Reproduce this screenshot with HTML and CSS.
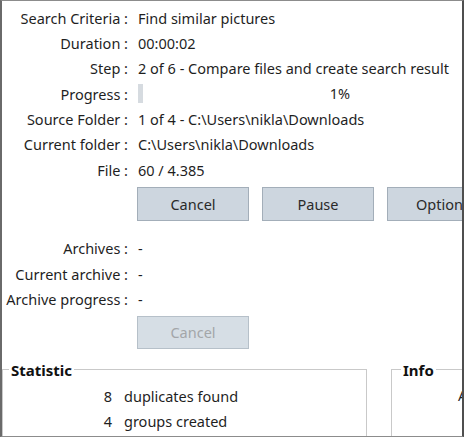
FILE: index.html
```html
<!DOCTYPE html>
<html>
<head>
<meta charset="utf-8">
<link rel="stylesheet" href="styles.css">
</head>
<body>
<div class="window">
  <div class="details">
    <span class="label">Search Criteria :</span><span class="value">Find similar pictures</span>
    <span class="label">Duration :</span><span class="value">00:00:02</span>
    <span class="label">Step :</span><span class="value">2 of 6 - Compare files and create search result</span>
    <span class="label">Progress :</span>
    <span class="value progress"><span class="progress-fill"></span><span class="progress-text">1%</span></span>
    <span class="label">Source Folder :</span><span class="value">1 of 4 - C:\Users\nikla\Downloads</span>
    <span class="label">Current folder :</span><span class="value">C:\Users\nikla\Downloads</span>
    <span class="label">File :</span><span class="value">60 / 4.385</span>
  </div>
  <div class="buttons main-buttons">
    <button class="btn">Cancel</button>
    <button class="btn">Pause</button>
    <button class="btn">Options</button>
  </div>
  <div class="details archive">
    <span class="label">Archives :</span><span class="value">-</span>
    <span class="label">Current archive :</span><span class="value">-</span>
    <span class="label">Archive progress :</span><span class="value">-</span>
  </div>
  <div class="buttons archive-buttons">
    <button class="btn" disabled>Cancel</button>
  </div>
  <div class="groups">
    <fieldset class="group statistic">
      <legend>Statistic</legend>
      <div class="stats">
        <span class="num">8</span><span>duplicates found</span>
        <span class="num">4</span><span>groups created</span>
      </div>
    </fieldset>
    <fieldset class="group info">
      <legend>Info</legend>
      <div class="info-text">Analyzing</div>
    </fieldset>
  </div>
</div>
</body>
</html>
```

FILE: styles.css
```css
html, body {
  margin: 0;
  padding: 0;
  background: #ffffff;
}

.window {
  width: 464px;
  height: 437px;
  box-sizing: border-box;
  border-top: 1px solid #8c8c8c;
  border-left: 2px solid #6a6a6a;
  border-right: 2px solid #4f4f4f;
  border-bottom: 1px solid #8c8c8c;
  background: #fff;
  overflow: hidden;
  font-family: "Noto Sans", "Open Sans", sans-serif;
  font-size: 14.5px;
  color: #1f1f1f;
}

.details {
  display: grid;
  grid-template-columns: 126px 1fr;
  column-gap: 10px;
  grid-auto-rows: 25.33px;
  align-items: center;
  padding-top: 4px;
}

.label {
  text-align: right;
  white-space: nowrap;
}

.value {
  white-space: nowrap;
}

.progress {
  position: relative;
  height: 19px;
  width: 404px;
}

.progress-fill {
  display: block;
  width: 5px;
  height: 19px;
  background: #d6dbe0;
}

.progress-text {
  position: absolute;
  left: 0;
  right: 0;
  top: 0;
  line-height: 19px;
  text-align: center;
}

.buttons {
  display: flex;
  gap: 13px;
  padding-left: 135px;
  white-space: nowrap;
}

.main-buttons {
  margin-top: 5px;
}

.btn {
  flex: none;
  width: 112px;
  height: 34px;
  box-sizing: border-box;
  background: #cdd6df;
  border: 1px solid #a3aeb9;
  border-radius: 0;
  font: inherit;
  color: #2a2a2a;
  padding: 0;
  white-space: nowrap;
  overflow: hidden;
}

.btn:disabled {
  background: #d6dee5;
  border-color: #b6c0c9;
  color: #a3a6a9;
  height: 33px;
}

.archive {
  margin-top: 14px;
  padding-top: 0;
  grid-auto-rows: 25.5px;
}

.archive-buttons {
  margin-top: 4px;
}

.groups {
  display: flex;
  gap: 24px;
  margin-top: 12px;
}

.group {
  margin: 0;
  border: 1px solid #c9c9c9;
  padding: 0 0 10px 0;
  min-width: 0;
  height: 100px;
  box-sizing: border-box;
}

.group legend {
  font-weight: bold;
  padding: 0 2px;
  margin-left: 6px;
  font-size: 15px;
  color: #111;
  line-height: 18px;
}

.info legend {
  margin-left: 9px;
}

.statistic {
  width: 365px;
  flex: none;
}

.info {
  flex: none;
  width: 120px;
}

.stats {
  display: grid;
  grid-template-columns: 109px auto;
  column-gap: 12px;
  grid-auto-rows: 25px;
  align-items: center;
  margin-top: 5px;
}

.num {
  text-align: right;
}

.info-text {
  margin-top: 6px;
  padding-left: 66px;
  white-space: nowrap;
}
```
